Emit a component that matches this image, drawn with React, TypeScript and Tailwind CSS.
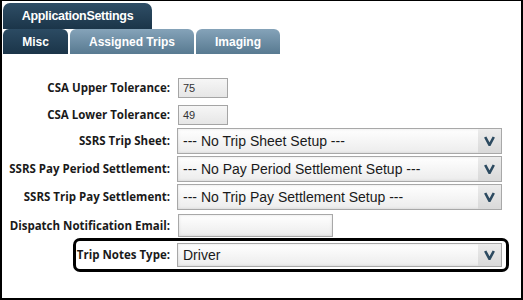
import React from "react";

const labelCls =
  "text-right text-[11.5px] font-bold text-[#1a1a1a] leading-none whitespace-nowrap";
const labelFont = { fontFamily: '"Open Sans", "Liberation Sans", sans-serif' } as React.CSSProperties;

function Chevron() {
  return (
    <svg width="11" height="10" viewBox="0 0 11 10">
      <path d="M1.2 1 L5.5 9 L9.8 1" fill="none" stroke="#2c4a60" strokeWidth="2.6" strokeLinejoin="miter" />
    </svg>
  );
}

function Select({ text, h, size = "text-[14px]" }: { text: string; h: string; size?: string }) {
  return (
    <div
      className={`flex ${h} w-[325px] border border-[#a8a8a8] bg-gradient-to-b from-white to-[#ececec] shadow-[inset_0_0_3px_rgba(0,0,0,0.12)]`}
    >
      <div
        className={`flex-1 flex items-center pl-[5px] ${size} text-[#1a1a1a] whitespace-nowrap`}
        style={{ fontFamily: '"Liberation Sans", Arial, sans-serif' }}
      >
        {text}
      </div>
      <div className="w-[23px] flex items-center justify-center bg-gradient-to-b from-[#ececec] to-[#d9d9d9]">
        <Chevron />
      </div>
    </div>
  );
}

function SmallInput({ value }: { value: string }) {
  return (
    <div
      className="h-[20px] w-[50px] border border-[#a5a5a5] bg-gradient-to-b from-[#f6f6f6] to-[#e6e6e6] flex items-center pl-[4px] text-[11px] text-[#333]"
      style={{ fontFamily: '"Liberation Sans", Arial, sans-serif' }}
    >
      {value}
    </div>
  );
}

export default function App() {
  return (
    <div className="w-[523px] h-[300px] bg-white border-black border-t border-l-2 border-r-2 border-b-2 overflow-hidden">
      <div className="pl-[1px] pt-[2px]" style={{ fontFamily: '"Liberation Sans", Arial, sans-serif' }}>
        <div className="flex">
          <div className="w-[149px] h-[26px] rounded-t-[7px] bg-gradient-to-b from-[#2f4e66] to-[#1b3549] text-white text-[12.5px] font-bold tracking-[-0.3px] flex items-center justify-center pt-[1px]">
            ApplicationSettings
          </div>
        </div>
        <div className="flex gap-[2px]">
          <div className="w-[65px] h-[25px] rounded-t-[6px] bg-gradient-to-b from-[#2c4b63] to-[#1b3549] text-white text-[12px] font-bold flex items-center justify-center">
            Misc
          </div>
          <div className="w-[124px] h-[25px] rounded-t-[6px] bg-gradient-to-b from-[#85a3b9] to-[#587a91] text-white text-[12px] font-bold flex items-center justify-center">
            Assigned Trips
          </div>
          <div className="w-[84px] h-[25px] rounded-t-[6px] bg-gradient-to-b from-[#85a3b9] to-[#587a91] text-white text-[12px] font-bold flex items-center justify-center">
            Imaging
          </div>
        </div>
      </div>

      <div className="flex flex-col pt-[24px]">
        <div className="flex items-center h-[20px]">
          <div className={`w-[168px] ${labelCls}`} style={labelFont}>CSA Upper Tolerance:</div>
          <div className="ml-[8px]"><SmallInput value="75" /></div>
        </div>
        <div className="flex items-center h-[20px] mt-[7px]">
          <div className={`w-[168px] ${labelCls}`} style={labelFont}>CSA Lower Tolerance:</div>
          <div className="ml-[8px]"><SmallInput value="49" /></div>
        </div>
        <div className="flex items-center h-[26px] mt-[3px]">
          <div className={`w-[168px] ${labelCls}`} style={labelFont}>SSRS Trip Sheet:</div>
          <div className="ml-[7px]"><Select text="--- No Trip Sheet Setup ---" h="h-[26px]" /></div>
        </div>
        <div className="flex items-center h-[26px] mt-[2px]">
          <div className={`w-[168px] ${labelCls}`} style={labelFont}>SSRS Pay Period Settlement:</div>
          <div className="ml-[7px]"><Select text="--- No Pay Period Settlement Setup ---" h="h-[26px]" /></div>
        </div>
        <div className="flex items-center h-[26px] mt-[2px]">
          <div className={`w-[168px] ${labelCls}`} style={labelFont}>SSRS Trip Pay Settlement:</div>
          <div className="ml-[7px]"><Select text="--- No Trip Pay Settlement Setup ---" h="h-[26px]" /></div>
        </div>
        <div className="flex items-center h-[23px] mt-[4px]">
          <div className={`w-[168px] ${labelCls}`} style={labelFont}>Dispatch Notification Email:</div>
          <div className="ml-[8px] h-[23px] w-[155px] border border-[#a8a8a8] bg-gradient-to-b from-white to-[#ececec] shadow-[inset_0_0_3px_rgba(0,0,0,0.12)]" />
        </div>
        <div className="mt-[1px] ml-[71px] w-[436px] h-[34px] border-[3px] border-black rounded-[7px] flex items-center">
          <div className={`w-[94px] ${labelCls}`} style={labelFont}>Trip Notes Type:</div>
          <div className="ml-[7px]"><Select text="Driver" h="h-[24px]" /></div>
        </div>
      </div>
    </div>
  );
}
